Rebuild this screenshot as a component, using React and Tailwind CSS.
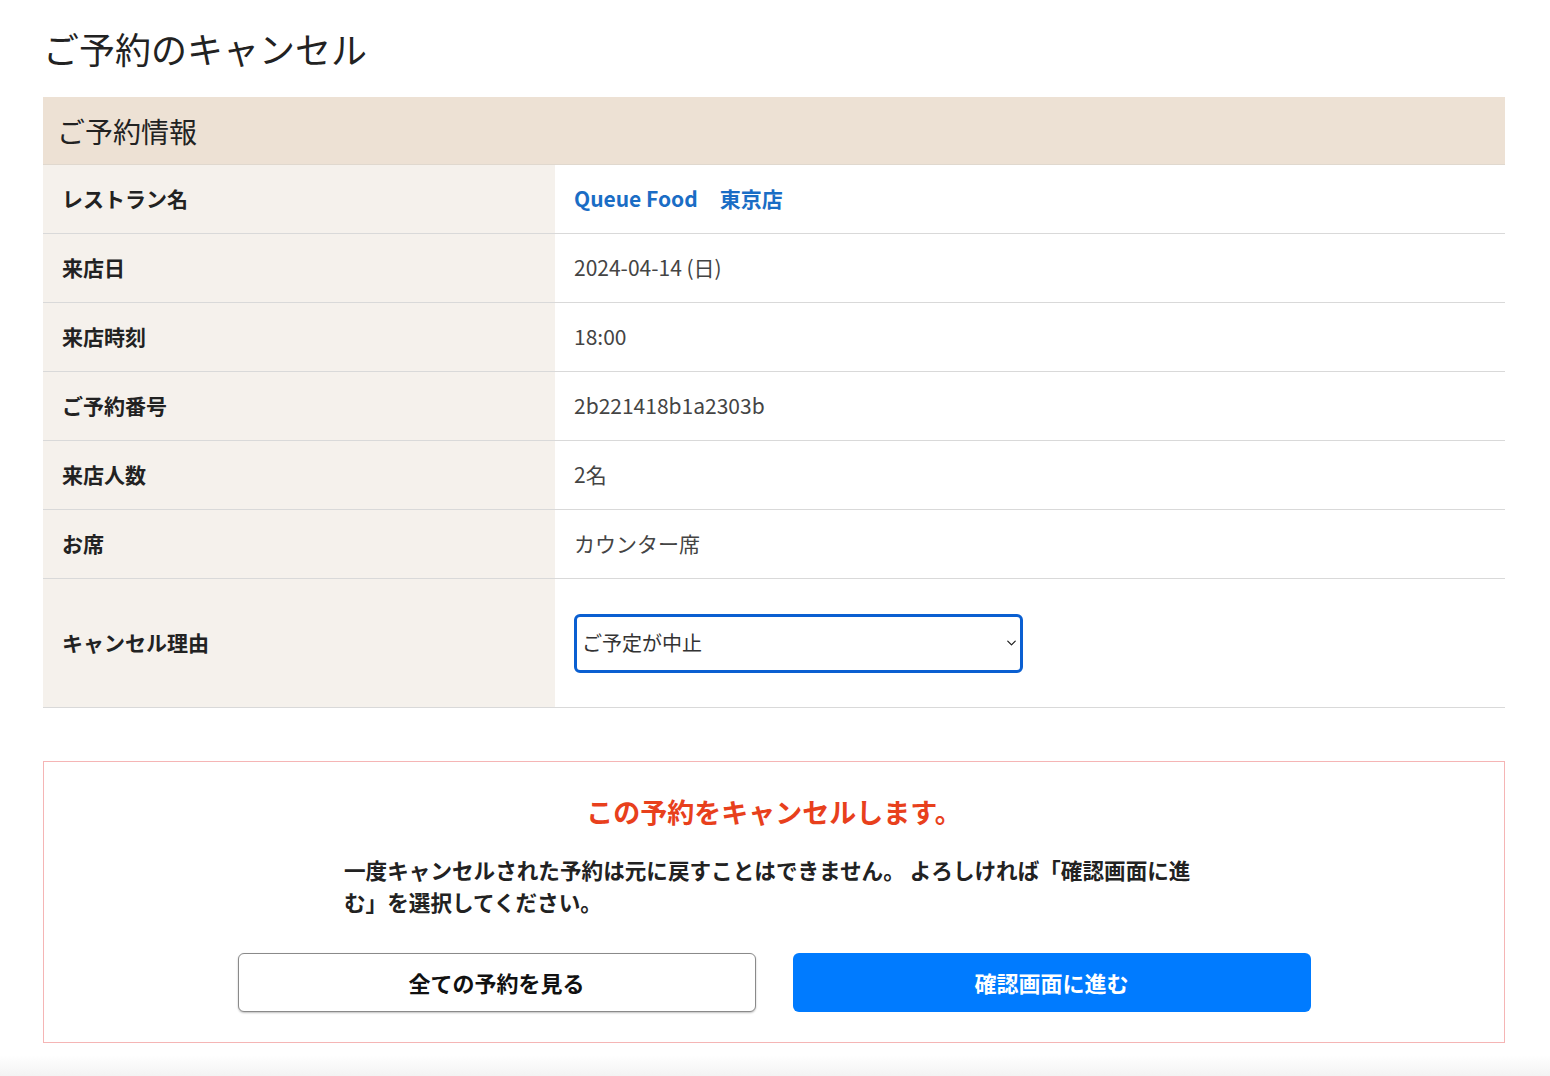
import { ChevronDown } from "lucide-react";

const rows = [
  { label: "来店日", value: "2024-04-14 (日)" },
  { label: "来店時刻", value: "18:00" },
  { label: "ご予約番号", value: "2b221418b1a2303b" },
  { label: "来店人数", value: "2名" },
  { label: "お席", value: "カウンター席" },
];

const font = '"Noto Sans CJK JP", "Noto Sans", sans-serif';

function Row({ label, children, tall }) {
  return (
    <div className="flex border-b border-[#d9d9d9]">
      <div
        className={`w-[512px] shrink-0 bg-[#f5f1ec] pl-[19px] flex items-center text-[21px] font-bold text-[#222] ${
          tall ? "h-[128px]" : "h-[68px]"
        }`}
      >
        {label}
      </div>
      <div className="flex-1 pl-[19px] flex items-center text-[21px] text-[#444]">{children}</div>
    </div>
  );
}

export default function App() {
  return (
    <div className="min-h-screen bg-white text-[#222]" style={{ fontFamily: font }}>
      <div className="pl-[43px] pr-[45px] pt-[22px]">
        <h1 className="text-[36px] font-normal leading-[52px] text-[#222]">ご予約のキャンセル</h1>

        {/* reservation info */}
        <div className="mt-[23px]">
          <div className="h-[68px] bg-[#ede1d4] border-b border-[#e0d8ce] pl-[14px] flex items-center text-[28px] font-normal text-[#222]">
            ご予約情報
          </div>
          <Row label="レストラン名">
            <span className="font-bold text-[#1a6dc5] text-[21px]">
              Queue Food<span className="ml-[22px]">東京店</span>
            </span>
          </Row>
          {rows.map((r) => (
            <Row key={r.label} label={r.label}>
              {r.value}
            </Row>
          ))}
          <Row label="キャンセル理由" tall>
            <div className="relative w-[449px]">
              <select
                defaultValue="plan"
                className="appearance-none w-full h-[59px] rounded-[6px] border-[3px] border-[#0a5fd1] bg-white pl-[5px] pr-8 text-[20px] text-[#333] outline-none"
                style={{ fontFamily: font }}
              >
                <option value="plan">ご予定が中止</option>
                <option value="other">その他</option>
              </select>
              <ChevronDown
                className="absolute right-[4px] top-1/2 -translate-y-1/2 text-[#222] pointer-events-none"
                size={15}
                strokeWidth={2}
              />
            </div>
          </Row>
        </div>

        {/* warning box */}
        <div className="mt-[53px] border border-[#f5b5b5] pt-[30px] pb-[30px] flex flex-col items-center">
          <h2 className="text-[27px] font-bold text-[#e8401c] leading-[40px]">
            この予約をキャンセルします。
          </h2>
          <p className="mt-[22px] w-[860px] text-[21.6px] font-bold leading-[32px] text-[#222]">
            一度キャンセルされた予約は元に戻すことはできません。 よろしければ「確認画面に進む」を選択してください。
          </p>
          <div className="mt-[35px] flex gap-[37px]">
            <button className="w-[518px] h-[59px] rounded-[6px] border border-[#8a8a8a] bg-white shadow-[0_1px_2px_rgba(0,0,0,0.25)] text-[22px] font-bold text-[#111]">
              全ての予約を見る
            </button>
            <button className="w-[518px] h-[59px] rounded-[6px] bg-[#007bff] text-[22px] font-bold text-white">
              確認画面に進む
            </button>
          </div>
        </div>
      </div>
      <div className="mt-[12px] h-[21px] bg-gradient-to-b from-white to-[#f3f3f3]" />
    </div>
  );
}
